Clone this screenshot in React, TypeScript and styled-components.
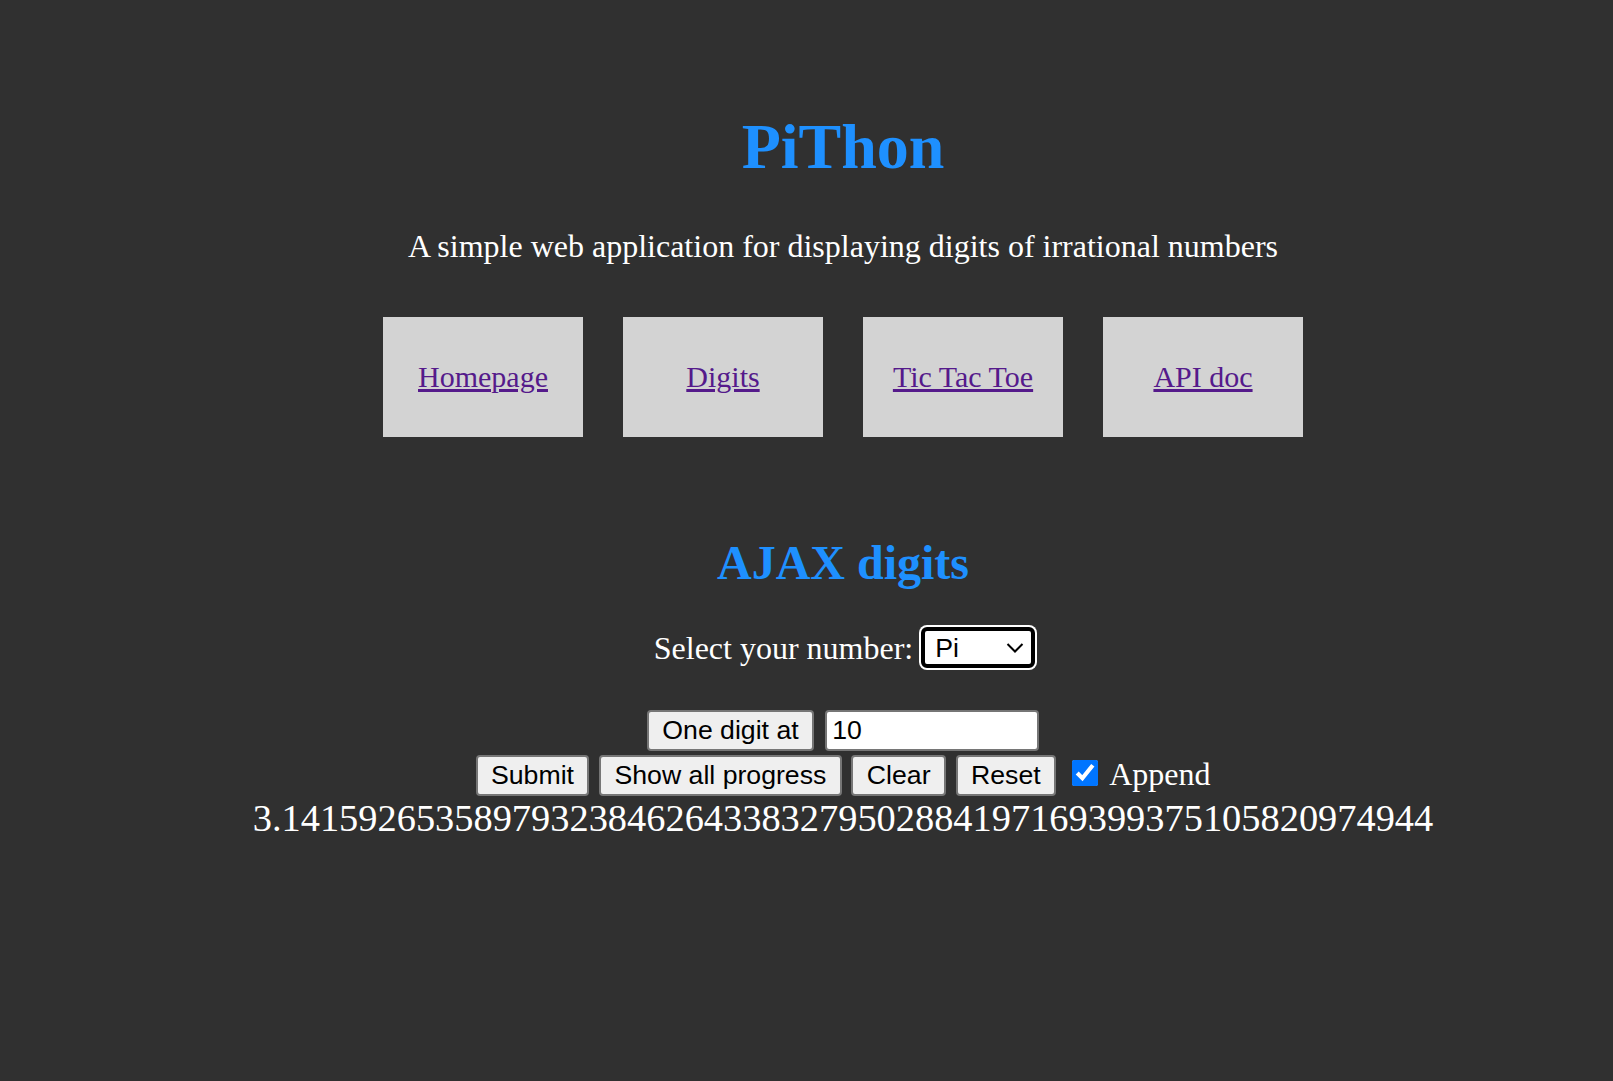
import React from 'react';
import styled, { createGlobalStyle } from 'styled-components';

const GlobalStyle = createGlobalStyle`
  html, body {
    margin: 0;
    padding: 0;
    background: #303030;
  }
  body {
    font-family: "Liberation Serif", "Times New Roman", serif;
    color: #fff;
  }
`;

const PI_DIGITS = '3.141592653589793238462643383279502884197169399375105820974944';

const NAV_LINKS = ['Homepage', 'Digits', 'Tic Tac Toe', 'API doc'];

const Page = styled.div`
  display: flex;
  flex-direction: column;
  align-items: center;
  padding: 115px 0 0 73px;
  min-height: 100vh;
  box-sizing: border-box;
`;

const Title = styled.h1`
  margin: 0;
  font-size: 64px;
  line-height: 64px;
  font-weight: bold;
  color: #1e90ff;
`;

const Subtitle = styled.p`
  margin: 51px 0 0;
  font-size: 32px;
  line-height: 32px;
`;

const Nav = styled.nav`
  display: flex;
  gap: 40px;
  margin-top: 55px;
`;

const NavBox = styled.div`
  display: flex;
  align-items: center;
  justify-content: center;
  width: 200px;
  height: 120px;
  background: #d3d3d3;
`;

const NavLink = styled.a`
  font-size: 30px;
  color: #551a8b;
  text-decoration: underline;
`;

const SectionTitle = styled.h2`
  margin: 102px 0 0;
  font-size: 48px;
  line-height: 48px;
  font-weight: bold;
  color: #1e90ff;
`;

const SelectRow = styled.div`
  display: flex;
  align-items: center;
  gap: 8px;
  margin-top: 40px;
  padding-left: 3px;
`;

const Label = styled.label`
  font-size: 32px;
  line-height: 32px;
`;

const SelectWrap = styled.span`
  position: relative;
  display: inline-flex;
  width: 114px;
  height: 41px;
  border-radius: 8px;
  background: #fff;
  box-sizing: border-box;
`;

const Select = styled.select`
  appearance: none;
  width: 100%;
  height: 100%;
  margin: 0;
  padding: 0 0 0 10px;
  border: 4px solid #000;
  border-radius: 6px;
  box-shadow: 0 0 0 2px #fff;
  box-sizing: border-box;
  background: #fff;
  font-family: "Liberation Sans", Arial, sans-serif;
  font-size: 26.67px;
  color: #000;
  outline: none;
`;

const Chevron = styled.svg`
  position: absolute;
  right: 11px;
  top: 50%;
  transform: translateY(-50%);
  width: 18px;
  height: 11px;
  pointer-events: none;
`;

const ControlRow = styled.div<{ $gap?: number; $top: number }>`
  display: flex;
  align-items: center;
  gap: ${(p) => p.$gap ?? 9.5}px;
  margin-top: ${(p) => p.$top}px;
`;

const Button = styled.button`
  height: 41px;
  padding: 0 13.5px;
  border: 2px solid #767676;
  border-radius: 4px;
  background: #efefef;
  font-family: "Liberation Sans", Arial, sans-serif;
  font-size: 26.67px;
  color: #000;
  box-sizing: border-box;
`;

const TextInput = styled.input`
  width: 214px;
  height: 41px;
  padding: 0 5px;
  border: 2px solid #767676;
  border-radius: 4px;
  background: #fff;
  font-family: "Liberation Sans", Arial, sans-serif;
  font-size: 26.67px;
  color: #000;
  box-sizing: border-box;
`;

const Checkbox = styled.input`
  width: 26px;
  height: 26px;
  margin: 0 2px 6px 6px;
  accent-color: #0075ff;
`;

const CheckLabel = styled.span`
  font-size: 32px;
  line-height: 32px;
  margin-bottom: 4px;
`;

const Digits = styled.div`
  margin-top: 3px;
  font-size: 38.4px;
  line-height: 38.4px;
`;

const App: React.FC = () => {
  return (
    <>
      <GlobalStyle />
      <Page>
        <Title>PiThon</Title>
        <Subtitle>A simple web application for displaying digits of irrational numbers</Subtitle>
        <Nav>
          {NAV_LINKS.map((link) => (
            <NavBox key={link}>
              <NavLink href="#">{link}</NavLink>
            </NavBox>
          ))}
        </Nav>

        <SectionTitle>AJAX digits</SectionTitle>
        <SelectRow>
          <Label htmlFor="number">Select your number:</Label>
          <SelectWrap>
            <Select id="number" defaultValue="pi">
              <option value="pi">Pi</option>
              <option value="e">e</option>
              <option value="sqrt2">Sqrt 2</option>
            </Select>
            <Chevron viewBox="0 0 18 11">
              <path d="M1.5 1.5 L9 9 L16.5 1.5" fill="none" stroke="#000" strokeWidth="2" />
            </Chevron>
          </SelectWrap>
        </SelectRow>

        <ControlRow $top={42} $gap={11}>
          <Button>One digit at</Button>
          <TextInput type="text" defaultValue="10" />
        </ControlRow>
        <ControlRow $top={4}>
          <Button>Submit</Button>
          <Button>Show all progress</Button>
          <Button>Clear</Button>
          <Button>Reset</Button>
          <Checkbox type="checkbox" defaultChecked />
          <CheckLabel>Append</CheckLabel>
        </ControlRow>
        <Digits>{PI_DIGITS}</Digits>
      </Page>
    </>
  );
};

export default App;
